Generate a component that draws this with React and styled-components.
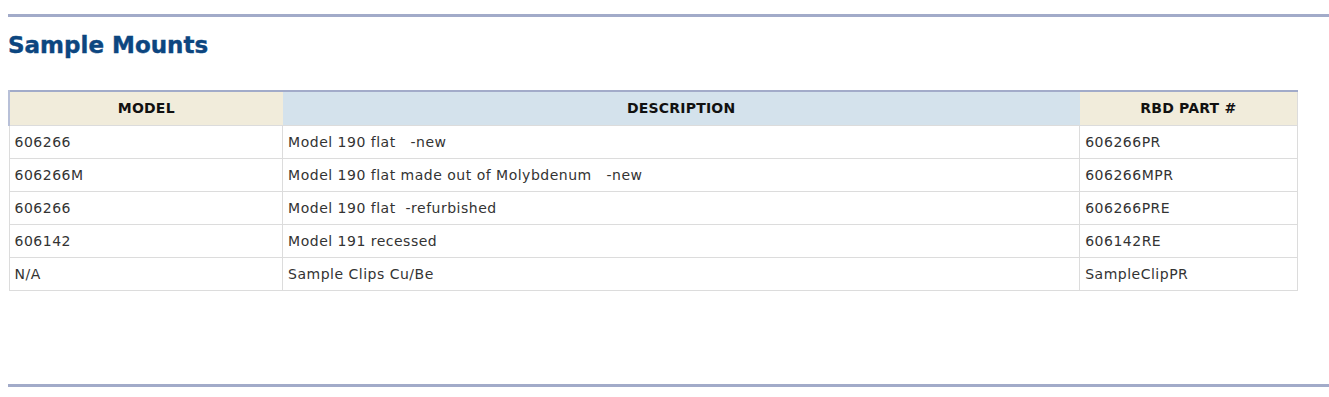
import React from "react";
import styled, { createGlobalStyle } from "styled-components";

const Global = createGlobalStyle`
  html, body { margin: 0; padding: 0; background: #fff; }
  body { font-family: "DejaVu Sans", Verdana, sans-serif; overflow: hidden; }
`;

const Page = styled.div`
  padding: 14px 0 0 8px;
  display: flex;
  flex-direction: column;
`;

const Rule = styled.div`
  height: 3px;
  background: #a2abc9;
  margin-top: ${(p) => p.$top || 0}px;
`;

const Title = styled.h2`
  margin: 15px 0 0 0;
  font-family: "DejaVu Sans", Verdana, sans-serif;
  font-weight: bold;
  font-size: 23px;
  line-height: 26px;
  color: #0c4680;
  -webkit-text-stroke: 0.4px #0c4680;
`;

const Table = styled.table`
  margin-top: 32px;
  width: 1290px;
  border-collapse: collapse;
  font-size: 14px;
  letter-spacing: 0.5px;
  color: #333;
  border-top: 2px solid #a2abc9;
`;

const Th = styled.th`
  height: 34px;
  padding: 0 5px;
  box-sizing: border-box;
  font-size: 14px;
  letter-spacing: 0.2px;
  font-weight: bold;
  color: #111;
  text-align: center;
  background: ${(p) => (p.$blue ? "#d4e2ec" : "#f1ecdb")};
  width: ${(p) => p.$w}px;
  border-left: ${(p) => (p.$first ? "2px solid #b8c0d8" : "none")};
  border-right: ${(p) => (p.$last ? "1px solid #dcdcdc" : "none")};
`;

const Td = styled.td`
  height: 33px;
  padding: 0 5px;
  box-sizing: border-box;
  border: 1px solid #dcdcdc;
  white-space: pre;
  vertical-align: middle;
`;

const rows = [
  ["606266", "Model 190 flat   -new", "606266PR"],
  ["606266M", "Model 190 flat made out of Molybdenum   -new", "606266MPR"],
  ["606266", "Model 190 flat  -refurbished", "606266PRE"],
  ["606142", "Model 191 recessed", "606142RE"],
  ["N/A", "Sample Clips Cu/Be", "SampleClipPR"],
];

export default function App() {
  return (
    <>
      <Global />
      <Page>
        <Rule />
        <Title>Sample Mounts</Title>
        <Table>
          <thead>
            <tr>
              <Th $first $w={274}>MODEL</Th>
              <Th $blue $w={798}>DESCRIPTION</Th>
              <Th $last $w={218}>RBD PART #</Th>
            </tr>
          </thead>
          <tbody>
            {rows.map((r, i) => (
              <tr key={i}>
                {r.map((c, j) => (
                  <Td key={j}>{c}</Td>
                ))}
              </tr>
            ))}
          </tbody>
        </Table>
        <Rule $top={93} />
      </Page>
    </>
  );
}
